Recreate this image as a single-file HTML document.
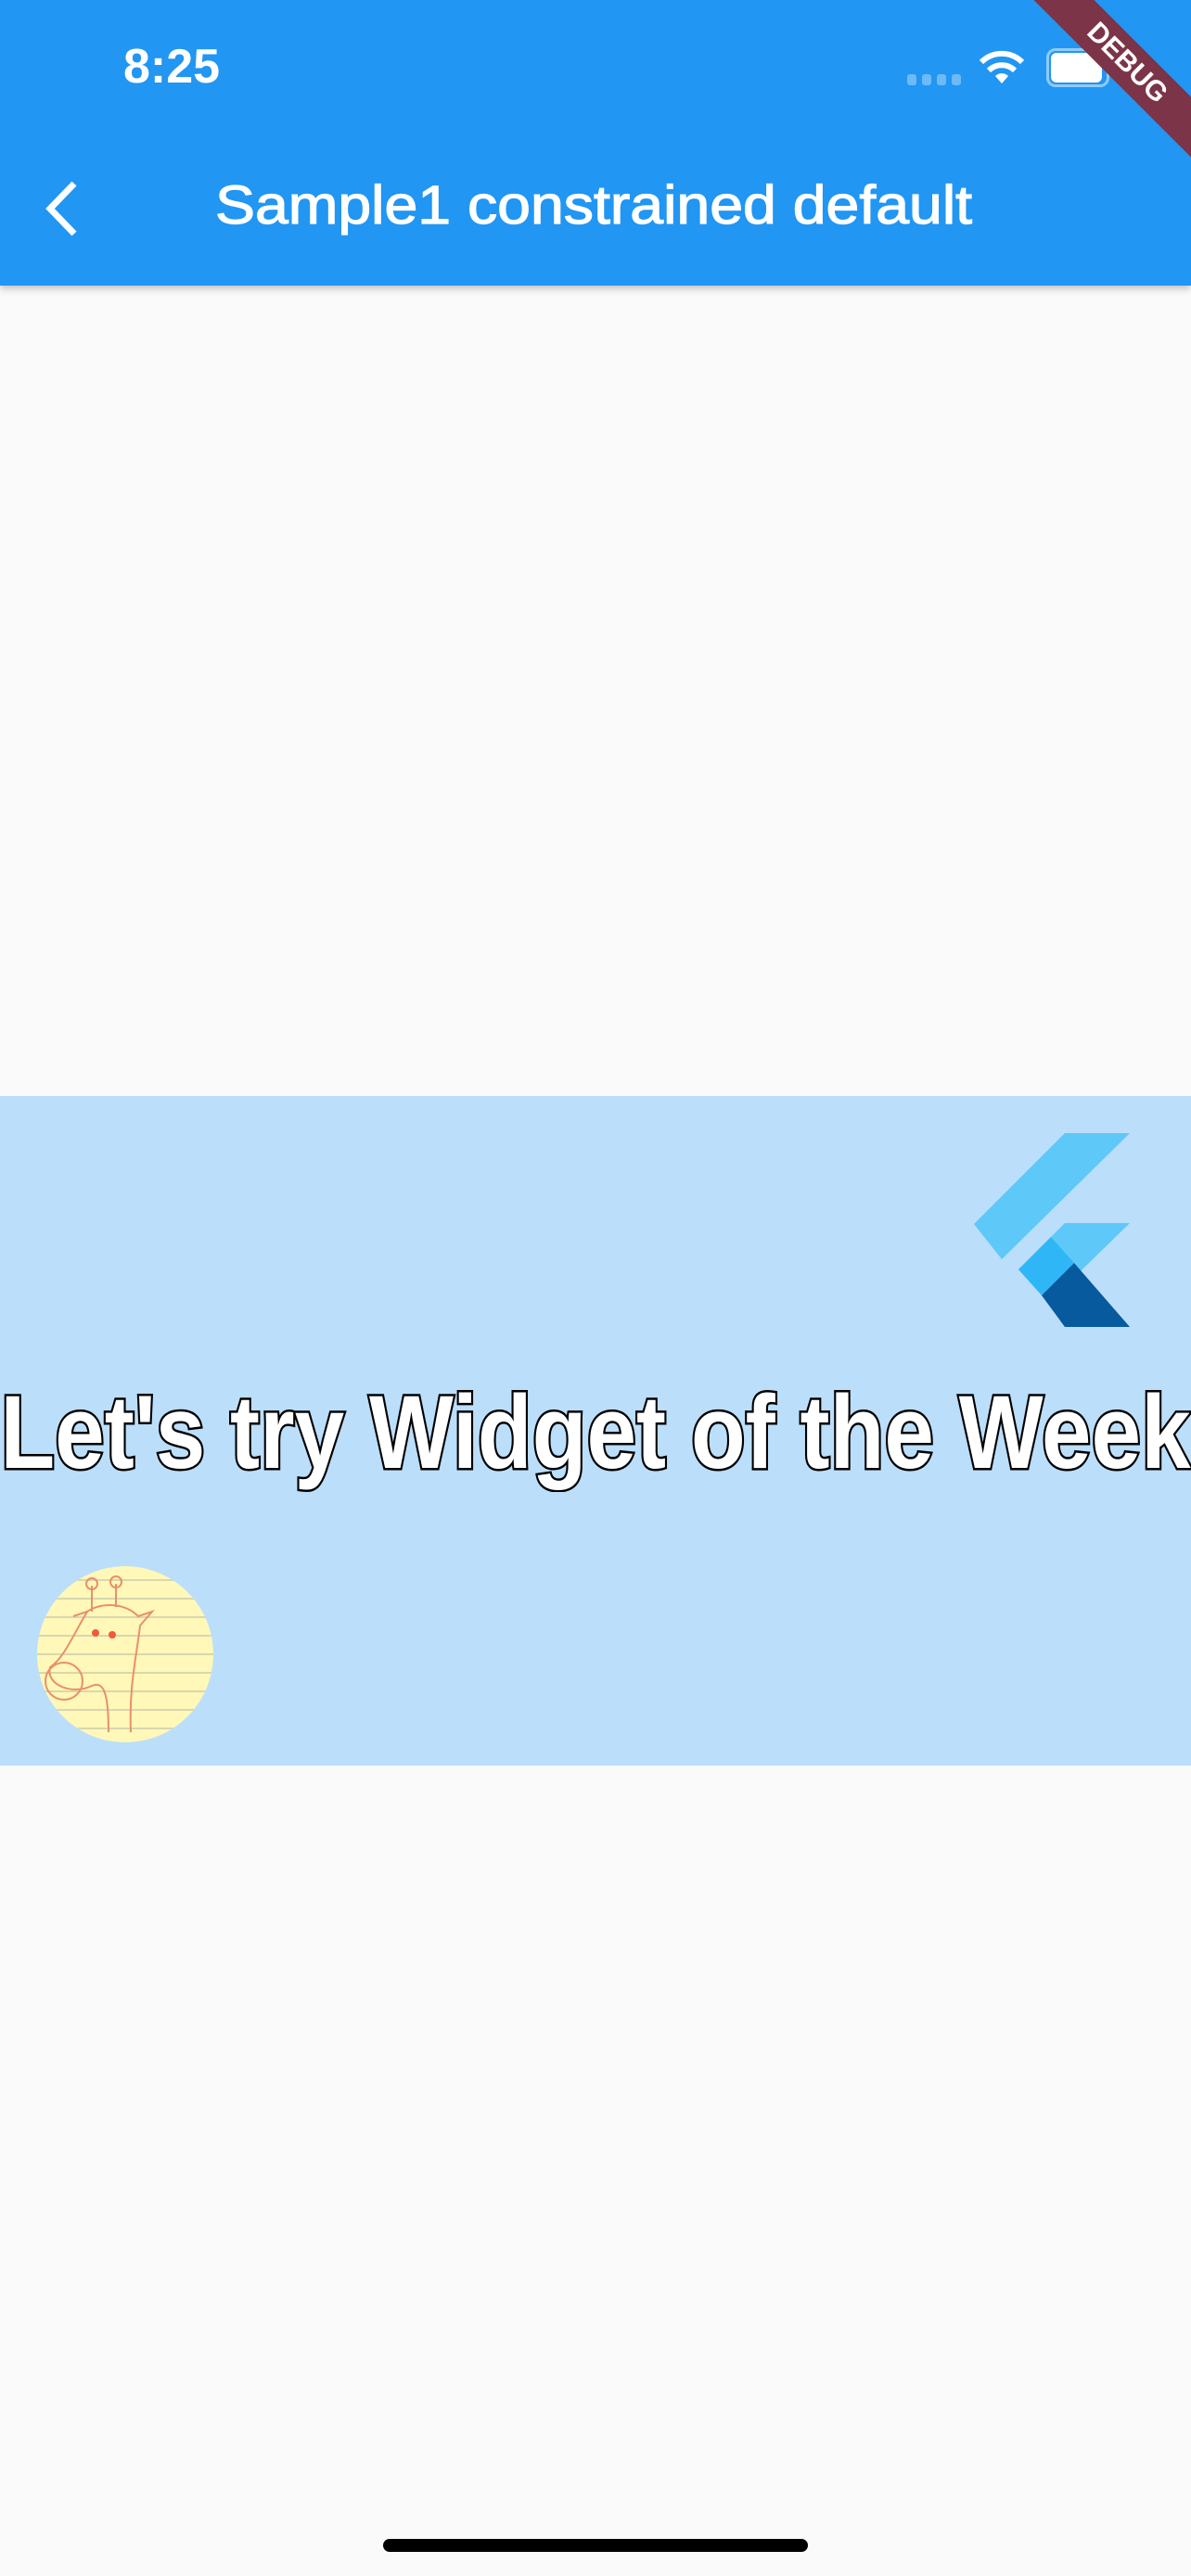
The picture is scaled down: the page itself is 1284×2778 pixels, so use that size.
<!DOCTYPE html>
<html><head><meta charset="utf-8"><style>
html,body{margin:0;padding:0}
body{width:1284px;height:2778px;background:#fafafa;position:relative;overflow:hidden;font-family:"Liberation Sans",sans-serif}
.bar{position:absolute;left:0;top:0;width:1284px;height:308px;background:#2196f3;box-shadow:0 3px 8px rgba(0,0,0,.25)}
.abs{position:absolute}
</style></head><body>
<div class="bar"></div>
<div class="abs" style="left:133px;top:42px;color:#fff;font-size:52px;font-weight:bold;white-space:nowrap">8:25</div>
<div class="abs" style="left:978px;top:80px;width:58px;height:12px;">
 <div class="abs" style="left:0;top:0;width:10px;height:12px;border-radius:3px;background:rgba(255,255,255,.35)"></div>
 <div class="abs" style="left:16px;top:0;width:10px;height:12px;border-radius:3px;background:rgba(255,255,255,.35)"></div>
 <div class="abs" style="left:32px;top:0;width:10px;height:12px;border-radius:3px;background:rgba(255,255,255,.35)"></div>
 <div class="abs" style="left:48px;top:0;width:10px;height:12px;border-radius:3px;background:rgba(255,255,255,.35)"></div>
</div>
<svg class="abs" style="left:1054px;top:52px" width="52" height="40" viewBox="0 0 52 40">
 <path d="M26 38 L19 30 A10 10 0 0 1 33 30 Z" fill="#fff"/>
 <path d="M12 24 A20 20 0 0 1 40 24" stroke="#fff" stroke-width="6" fill="none"/>
 <path d="M4 15 A31 31 0 0 1 48 15" stroke="#fff" stroke-width="6" fill="none"/>
</svg>
<div class="abs" style="left:1128px;top:52px;width:62px;height:36px;border:3px solid rgba(255,255,255,.5);border-radius:10px"></div>
<div class="abs" style="left:1133px;top:57px;width:55px;height:32px;background:#fff;border-radius:6px"></div>
<div class="abs" style="left:1065px;top:45px;width:300px;height:46px;background:#7c3448;transform:rotate(45deg);transform-origin:center;color:#fff;font-weight:bold;font-size:30px;line-height:46px;text-align:center">DEBUG</div>
<svg class="abs" style="left:44px;top:194px" width="44" height="62" viewBox="0 0 44 62">
 <path d="M36 4 L10 31 L36 58" stroke="#fff" stroke-width="7" fill="none"/>
</svg>
<div class="abs" style="left:232px;top:188px;color:#fff;font-size:58px;white-space:nowrap;-webkit-text-stroke:1.2px #fff;transform:scaleX(1.11);transform-origin:left">Sample1 constrained default</div>

<div class="abs" style="left:0;top:1182px;width:1284px;height:722px;background:#bbdefb"></div>
<svg class="abs" style="left:1050px;top:1222px" width="170" height="210" viewBox="0 0 170 210">
 <polygon points="168,0 98,0 0,98 30,136" fill="#5ec8f8"/>
 <polygon points="168,97 98,97 48,147 83,180" fill="#5ec8f8"/>
 <polygon points="48,147 83,112 108,140 73,175" fill="#2fb6f6"/>
 <polygon points="73,175 108,140 168,209 98,209" fill="#075a9e"/>
</svg>
<div class="abs" style="left:-300px;top:1480px;width:1884px;text-align:center;font-size:112px;font-weight:bold;line-height:130px;color:#fff;-webkit-text-stroke:5px #000;paint-order:stroke fill;white-space:nowrap;transform:scaleX(.86);transform-origin:center">Let's try Widget of the Week</div>
<svg class="abs" style="left:39px;top:1688px" width="192" height="192" viewBox="0 0 192 192">
 <defs><clipPath id="c"><circle cx="96" cy="96" r="95"/></clipPath></defs>
 <g clip-path="url(#c)">
 <rect width="192" height="192" fill="#fff8b8"/>
 <g stroke="#d9d6b0" stroke-width="2">
  <line x1="0" y1="16" x2="192" y2="16"/><line x1="0" y1="36" x2="192" y2="36"/><line x1="0" y1="56" x2="192" y2="56"/><line x1="0" y1="76" x2="192" y2="76"/><line x1="0" y1="96" x2="192" y2="96"/><line x1="0" y1="116" x2="192" y2="116"/><line x1="0" y1="136" x2="192" y2="136"/><line x1="0" y1="156" x2="192" y2="156"/><line x1="0" y1="176" x2="192" y2="176"/>
 </g>
 <g stroke="#e8906a" stroke-width="2" fill="none">
  <path d="M60 50 L60 22 M86 45 L86 20"/>
  <circle cx="60" cy="20" r="6"/><circle cx="86" cy="18" r="6"/>
  <path d="M40 55 L55 50 C70 40 95 40 110 55 L125 50 L112 65 C108 100 100 130 102 180"/>
  <path d="M55 50 C40 75 30 100 15 110 C10 130 40 140 60 130 C72 125 78 135 78 180"/>
  <ellipse cx="30" cy="125" rx="20" ry="20"/>
 </g>
 <circle cx="64" cy="73" r="4" fill="#f05a3a"/><circle cx="82" cy="75" r="4" fill="#f05a3a"/>
 </g>
</svg>
<div class="abs" style="left:413px;top:2738px;width:458px;height:14px;border-radius:7px;background:#000"></div>
</body></html>
